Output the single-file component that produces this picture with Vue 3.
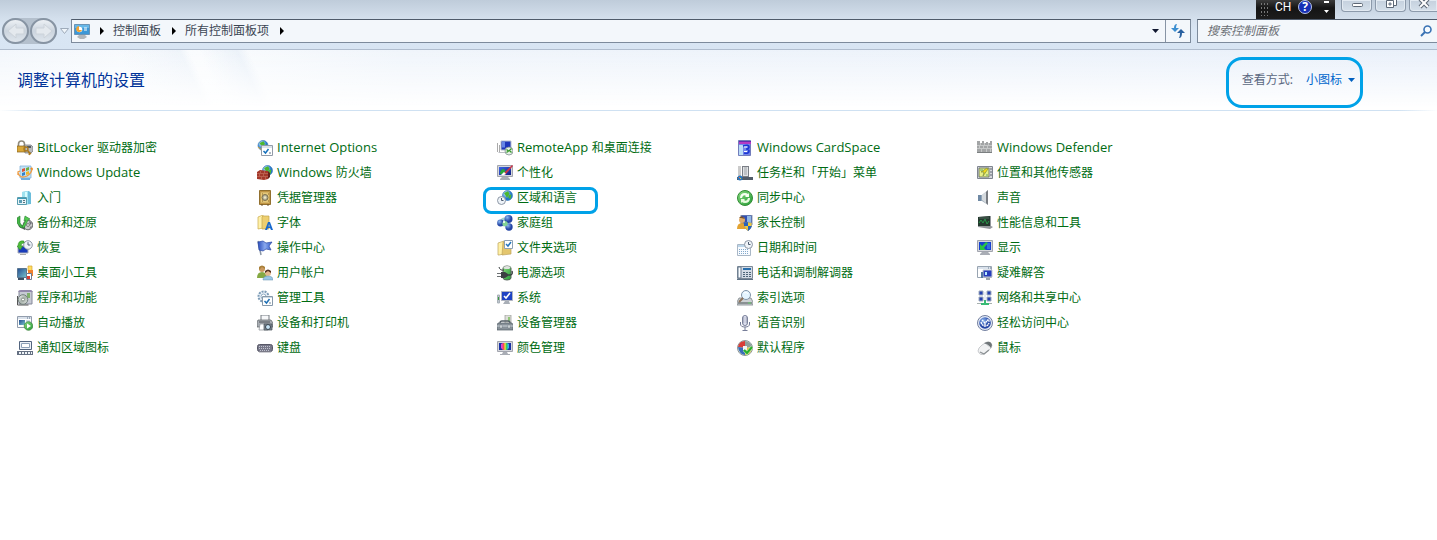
<script setup>
const monitor = (screen, extra = '') =>
  `<path d="M0.5 1.5h15v10h-15z" fill="#d5d7dc" stroke="#a2a5ae"/><path d="M2 3h12v7H2z" fill="${screen}"/><path d="M6 12h4l1 2h2v1H3v-1h2z" fill="#a9adb5"/>${extra}`
const globe = (cx, cy, r) =>
  `<circle cx="${cx}" cy="${cy}" r="${r}" fill="url(#globe)" stroke="#2d6fb4" stroke-width=".6"/><path d="M${cx - r * 0.7} ${cy - r * 0.5}l${r * 0.8}-${r * 0.35} ${r * 0.3} ${r * 0.5}-${r * 0.5} ${r * 0.8}zM${cx + r * 0.2} ${cy}l${r * 0.6}-${r * 0.2}-${r * 0.2} ${r * 0.9}-${r * 0.4}-${r * 0.2}z" fill="#4cb82f"/>`
const clock = (cx, cy, r) =>
  `<circle cx="${cx}" cy="${cy}" r="${r}" fill="#eef3f8" stroke="#8d97a5"/><path d="M${cx} ${cy - r + 1.5}V${cy}h${r - 2}" fill="none" stroke="#4c5a70"/>`

const icons = {
  bitlocker: '<path d="M1.5 7V4a3 3 0 0 1 6 0v3" fill="none" stroke="#8f8a7c" stroke-width="1.6"/><path d="M7 5h7l2 2v4l-2 2H8z" fill="#b9bbbd" stroke="#707478" stroke-width=".7"/><path d="M10 6h4v2h-4z" fill="#555b60"/><path d="M0 6h8v6H0z" fill="#d9a738" stroke="#82601c" stroke-width=".7"/><circle cx="9" cy="9" r="2" fill="none" stroke="#a87820" stroke-width="1.4"/><path d="M10 10l4 4M12 12l-1 1M13 13l-1 2" stroke="#a87820" stroke-width="1.5"/>',
  internet: globe(6, 5.5, 5) + '<path d="M1 7q3 4 8 3" fill="none" stroke="#e5ad32"/><path d="M4.500 5.500h11v10h-11z" fill="#fff" stroke="#929ba8"/><path d="M5 6h10v2H5z" fill="#dbe2ea"/><path d="M6.500 11l2 2 3-4" fill="none" stroke="#1671bd" stroke-width="1.500"/><path d="M12 13h2" stroke="#60758a"/>',
  remote: '<path d="M.5 3v9M2.500 5v8" stroke="#aaa"/><path d="M4 1h10v9H4z" fill="#1f37ba" stroke="#b9c1cd"/><path d="M5 1.500h3v6H5z" fill="#6686e5"/><path d="M1.500 12.500h9" stroke="#bcbfc4"/><circle cx="12" cy="11" r="4" fill="#e8f1e8" stroke="#808f91" stroke-width=".8"/><path d="M9.500 9.500l2 1.500-2 1.500M14.500 8.500l-2 2 2 2" fill="none" stroke="#35982b" stroke-width="1.300"/>',
  cardspace: '<path d="M1.500.5h12v15h-12z" fill="#7486eb" stroke="#727dbc"/><path d="M2 1h12v3H2z" fill="#b43bc4"/><path d="M2 1h12v1H2z" fill="#632dad"/><path d="M2 5h4v10H2z" fill="#b9dcf7"/><path d="M6 6q6-2 6 1 0 2-3 2 3 0 3 2 0 3-5 2" fill="none" stroke="#1b36d3" stroke-width="1.600"/><path d="M7 7h3M7 11.500h3" stroke="#fff"/>',
  defender: '<path d="M0 1h3v2h2V1h2v2h2V2h2v1h2V1h2v11H0z" fill="#a3a5a6"/><path d="M0 5.500h15M0 8.500h15M3.500 3v2M7.500 3v2M11.500 3v2M2.500 6v2M6.500 6v2M10.500 6v2M4.500 9v3M9.500 9v3M13.500 9v3" stroke="#cfd0d0" stroke-width=".8"/><path d="M0 12.500h15" stroke="#7b7f80"/>',
  update: '<path d="M3 1h11v12H3z" fill="#bfe2f6" stroke="#86b4d8" stroke-width=".8"/><path d="M4 13h9v2H4z" fill="#71aee1"/><path d="M5 4l3-1v3L5 7z" fill="#de5334"/><path d="M9 3l3-1v3L9 6z" fill="#70ae3c"/><path d="M5 8l3-1v3l-3 1z" fill="#3181cc"/><path d="M9 7l3-1v3l-3 1z" fill="#efb82e"/><path d="M1 8q2 6 9 3 5-3 5-8M1 10V7l2-1" fill="none" stroke="#ef9c43" stroke-width="1.300"/><path d="M13 4l2-2 1 3z" fill="#ef8c23"/>',
  firewall: globe(10.500, 5.500, 5) + '<path d="M0 7l3-2 8 1v8l-4 1-7-1z" fill="#a4382a"/><path d="M0 8.500h11M0 11.500h11M3.500 6v2M7.500 6v2M2.500 9v2M6.500 9v2M4.500 12v3M8.500 12v3" stroke="#d08471" stroke-width=".5"/><path d="M11 6l2 2v4l-2 2z" fill="#66201b"/>',
  personal: '<path d="M.5.500h15v11H.5z" fill="#d5d7dc" stroke="#a2a5ae"/><path d="M2 2h12v8H2z" fill="url(#blue)"/><path d="M5 12h6l2 2v1H3v-1z" fill="#a9adb5"/><path d="M3 9q0-5 4-5l2 3-2 3z" fill="#28a73a"/><path d="M7 8l8-8 1 1-7 8-2 1z" fill="#c9364a"/><path d="M4 10l3-3 2 2-2 1z" fill="#fff"/>',
  taskbar: '<path d="M1 1h3v12H1z" fill="#cbcbcb"/><path d="M5 1h7v11H5z" fill="#7b7f86"/><path d="M6 2h5v9H6z" fill="#e2e4e6"/><path d="M7 3h3M7 5h3M7 7h3M7 9h3" stroke="#9da1a6"/><path d="M0 12h16v3H0z" fill="#525c68"/><circle cx="3" cy="13" r="2.500" fill="#2e78bd"/><path d="M2 12h1v1H2z" fill="#ef6a3c"/><path d="M3 13h1v1H3z" fill="#f2c33d"/>',
  sensor: '<path d="M.5 1.500h15v12H.5z" fill="#d6d8dc" stroke="#7f858f"/><path d="M2 3h10v9H2z" fill="#e7ef85" stroke="#58655b" stroke-width=".8"/><path d="M10 3L4 7h3l-1 4 5-7z" fill="#f4db15" stroke="#6a7d43" stroke-width=".6"/><path d="M3 5h3M9 10h2" stroke="#60a46e"/><path d="M14 3v2M14 6v2M14 9v2" stroke="#626a77"/>',
  start: '<path d="M5 2l7-1 2 2v11l-9 1z" fill="#6bbddb"/><path d="M5 2l6-1v13l-6 1z" fill="#9fe2ef"/><path d="M8 2h2v6H8z" fill="#d8fcff"/><path d="M.5 7.500h9v7h-9z" fill="#e7f3f7" stroke="#589cae"/><path d="M1 8h8v1H1z" fill="#3c9cb8"/><path d="M2 10h3v3H2z" fill="#5a9db4"/><path d="M6 10.500h2M6 12.500h2" stroke="#59737d"/>',
  vault: '<path d="M2.500.5h11v14h-11z" fill="#c4953f" stroke="#92702f"/><path d="M3.500 2h9v11h-9z" fill="#e5c879" stroke="#b9944b" stroke-width=".7"/><circle cx="8" cy="7.500" r="3" fill="#b5b096" stroke="#685d3d" stroke-width=".8"/><circle cx="8" cy="7.500" r="1.200" fill="#eee7c4"/><path d="M5 4h1M11 4h1M5 11h1M11 11h1" stroke="#8a652a"/><path d="M4 15h2M10 15h2" stroke="#70522a"/>',
  region: globe(10.500, 5.500, 5) + clock(4.500, 10.500, 4),
  sync: '<circle cx="8" cy="8" r="7.500" fill="url(#green)" stroke="#338c35"/><path d="M3 8q0-5 5-5 2 0 3 1l1-1v4H8l1-1Q6 4 5 8z" fill="#f6fff2"/><path d="M13 8q0 5-5 5-2 0-3-1l-1 1V9h4l-1 1q3 2 4-2z" fill="#e8fbdf"/>',
  sound: '<path d="M1 5h4l6-5v15l-6-4H1z" fill="url(#silver)"/><path d="M1 5h3v6H1z" fill="#6f89a4"/><path d="M9 2l2-2v15l-2-2z" fill="#777b81"/><path d="M5 5l4-3v11l-4-3z" fill="#d5dade"/>',
  backup: '<circle cx="11" cy="10" r="4.800" fill="#c8c9ca" stroke="#67696a"/><circle cx="11" cy="10" r="1.400" fill="#fff" stroke="#777"/><path d="M12 6l3 2-2 2zM12 14l2-3 1 1z" fill="#706f79"/><path d="M1 9l7 2v4l-6-3z" fill="#5a5e60"/><path d="M0 3l3-2v7l3 4-2 1-4-5z" fill="#46b649" stroke="#21782a" stroke-width=".6"/><path d="M5 12l4-7-2 1 1-5 5 3-2 1-4 8z" fill="#53ca50" stroke="#23822b" stroke-width=".6"/>',
  fonts: '<path d="M1 2l5-2v13l-5 1z" fill="#fff1a9" stroke="#c9a94a" stroke-width=".7"/><path d="M6 1h6v13H5V2z" fill="#edcf70" stroke="#c2a34b" stroke-width=".7"/><path d="M8 15l3-8h2l3 8h-2l-1-2h-2l-1 2zM11.300 11.500h1.400L12 9z" fill="#1769cf"/>',
  homegroup: '<circle cx="7.500" cy="7" r="4.500" fill="#72b9b3" opacity=".65"/><circle cx="3.500" cy="8" r="3.400" fill="url(#ball)"/><circle cx="11.500" cy="4" r="4" fill="url(#ball)"/><circle cx="12" cy="12" r="3.700" fill="url(#ball)"/><circle cx="8" cy="8.500" r="2.600" fill="#83d394"/><circle cx="7" cy="7" r="1" fill="#fff"/>',
  parental: '<path d="M4 0h11v10H4z" fill="#304fb3" stroke="#8f9cad"/><path d="M10 1h4v8h-4z" fill="#91b8e4"/><circle cx="5" cy="5" r="3" fill="#e0ac6b"/><path d="M0 14q0-6 5-6t5 6z" fill="#e3a331"/><path d="M2 3q3-4 6 1l-4-1z" fill="#75502c"/><path d="M7 8q3 0 4-1 2 1 4 1 0 5-4 8-4-3-4-8z" fill="#f1ca38" stroke="#8d949a" stroke-width=".6"/><path d="M11 7v4H7q0-1 0-3zM11 11h4q-1 3-4 5z" fill="#2862ba"/>',
  performance: '<path d="M1 2l13-1v10l2 1-3 2-12-2z" fill="#92969b"/><path d="M1 2l12-1v10H1z" fill="#24392e"/><path d="M2 8l2-3 2 3 2-4 2 5 2-3" fill="none" stroke="#299349"/><path d="M2 3h10" stroke="#4f665b"/>',
  recovery: '<path d="M1 6h10v7H1z" fill="#193cba" stroke="#a9adb7"/><path d="M3 14h6v1H3z" fill="#aaa"/>' + clock(11, 5, 4.300) + '<path d="M1 6q0-6 6-5v2Q4 3 4 6h2l-3 4-3-4z" fill="#4cbb38" stroke="#2e8626" stroke-width=".5"/>',
  action: '<path d="M1 1l3 14" stroke="#8995a5" stroke-width="1.500"/><path d="M1 2l5-1 3 2 6-1-3 4 2 4-5-1-3 2-4-1z" fill="url(#flag)" stroke="#2948a4" stroke-width=".7"/>',
  folder: '<path d="M1 3l6-2v13l-5 1H1z" fill="#fff0a5" stroke="#bba35d" stroke-width=".7"/><path d="M6 2h8v12l-9 1z" fill="#e4c66d" stroke="#bfa35c" stroke-width=".7"/><path d="M7.500.5h8v8h-8z" fill="#fff" stroke="#8da1b4"/><path d="M9 4l2 2 3-4" fill="none" stroke="#2475bd" stroke-width="1.500"/>',
  date: '<path d="M.5 4.500h13v11H.5z" fill="#f8fbff" stroke="#a9b7c6"/><path d="M1 5h12v2H1z" fill="#bcd6ea"/><path d="M2 9.500h10M2 11.500h10M2 13.500h10" stroke="#83a9cb" stroke-dasharray="1 1"/>' + clock(11.500, 4.500, 4),
  display: '<path d="M.5.500h15v11H.5z" fill="#d5d7dc" stroke="#a2a5ae"/><path d="M2 2h12v8H2z" fill="#1741d1"/><path d="M5 12h6l2 2v1H3v-1z" fill="#a9adb5"/><path d="M13 4H9M13 6h-3M13 8h-3" stroke="#4ba3ed"/><path d="M3 4v6h6L7 8l4-5-2-1-4 4z" fill="#29c442"/>',
  gadgets: '<path d="M.5 3.500h9v9h-9z" fill="url(#screen)" stroke="#597690"/><path d="M11 1h4v5h-4z" fill="#ffdd60" stroke="#d6a331" stroke-width=".7"/><path d="M11 5h5v6h-5z" fill="#ef812d"/><path d="M9.500 8.500h5v6h-5z" fill="#fff" stroke="#6d7b90"/><path d="M10 11h3v3h-3z" fill="#db3b32"/><path d="M1 13h6v2H1z" fill="#3d5064"/>',
  users: '<circle cx="5" cy="4" r="3" fill="#cb9960"/><path d="M2 5V2q3-3 6 0v2L5 2z" fill="#a8803a"/><path d="M0 13q0-6 5-6t5 6z" fill="#85a943"/><circle cx="11" cy="8" r="3" fill="#e4b88e"/><path d="M8 8V6q3-3 6 0v2l-3-2z" fill="#55331f"/><path d="M6 15q0-4 5-4t5 4z" fill="#9ac6e3" stroke="#5c8fae" stroke-width=".5"/>',
  power: '<path d="M6 3q0-2 4-2t4 2v10q0 2-4 2t-4-2z" fill="url(#green)" stroke="#58635b"/><ellipse cx="10" cy="2.500" rx="3.500" ry="1.500" fill="#dfe3df"/><path d="M2 2q1 4 5 3" fill="none" stroke="#393f40"/><path d="M4 7h4l3 2v2l-3 2H4z" fill="#3b4042"/><path d="M0 8.500h4M0 11.500h4" stroke="#6b7072"/><path d="M11 10h2q3 0 2-4" fill="none" stroke="#393f40" stroke-width="1.400"/>',
  phone: '<path d="M.5 1.500h15v12H.5z" fill="#d3dbe5" stroke="#7c8997"/><path d="M1 2h3v11H1z" fill="#f9fcff" stroke="#66798c"/><path d="M6 3h8v2H6z" fill="#286ead"/><path d="M6 7.500h8M6 9.500h8M6 11.500h8" stroke="#4e6578" stroke-dasharray="2 1"/><path d="M0 14.500h16" stroke="#5f7286"/>',
  trouble: '<path d="M.5 1.500h14v11H.5z" fill="#fff" stroke="#98a4b1"/><path d="M1 2h13v2H1z" fill="#dae2ec"/><path d="M11 3h3" stroke="#65798e" stroke-dasharray="1 1"/><path d="M6 5h9v7H6z" fill="#263dba" stroke="#c4cad3"/><path d="M9 13h4v2H9z" fill="#9ba3ac"/><path d="M4 7h2v6H4z" fill="#5478a1"/><path d="M8 10V7h2v3z" fill="#b7eaff"/>',
  programs: '<path d="M2 1h13v13H2z" fill="#c7cad4" stroke="#85899a"/><path d="M1 1l3-1h10l2 2H2z" fill="#9388ac"/><path d="M10 3h3v5h-3z" fill="#7eb06a"/><path d="M.5 6v9h11" fill="none" stroke="#555"/><circle cx="6" cy="9.500" r="4.800" fill="url(#disc)" stroke="#72807c"/><circle cx="6" cy="9.500" r="1.500" fill="#fff" stroke="#859087"/>',
  tools: '<circle cx="6.500" cy="6.500" r="5" fill="#edf4fb" stroke="#7d9cb7" stroke-width="2" stroke-dasharray="2 1"/><circle cx="6.500" cy="6.500" r="2.500" fill="#fff" stroke="#8eaac1"/><path d="M5.500 6.500h10v9h-10z" fill="#fff" stroke="#8799aa"/><path d="M6 7h9v1H6z" fill="#cad9e5"/><path d="M7.500 11l2 2 3-4" fill="none" stroke="#1e70b5" stroke-width="1.500"/><path d="M12 13h2" stroke="#71879b"/>',
  system: '<path d="M.5 5v8h2V5z" fill="#bdc5cd" stroke="#a9b1b8"/><path d="M1.500 7v3" stroke="#3b9a42"/><path d="M4.500 1.500h11v9h-11z" fill="#1f43c3" stroke="#b0b5c0"/><path d="M7 6l2 2 4-5" fill="none" stroke="#fff" stroke-width="1.600"/><path d="M8 11h4l1 3H6z" fill="#a9afb7"/>',
  index: '<path d="M2 8h12l2 4v3H0v-3z" fill="#cdd1d4" stroke="#7c8489" stroke-width=".8"/><path d="M1 12h14v2H1z" fill="#8a9193"/><path d="M11 13h3" stroke="#65d16a"/><circle cx="9" cy="5" r="4.500" fill="#e4f4ff" stroke="#8093a7"/><path d="M6 8l-4 4" stroke="#8d735c" stroke-width="2"/><path d="M7 3q2-2 4 1" fill="none" stroke="#fff"/>',
  network: '<path d="M2 1h4v4H2zM10 1h4v4h-4zM2 7h4v4H2zM10 7h4v4h-4z" fill="#2440af" stroke="#a1adbd"/><path d="M8 2v11" stroke="#d4ddeb"/><path d="M7 10h2v3h3v2H4v-2h3z" fill="#39bb76"/><path d="M0 13.500h4M12 13.500h3" stroke="#a7b0ae"/>',
  autoplay: '<path d="M.5 1.500h14v11H.5z" fill="#fff" stroke="#929dac"/><path d="M1 2h13v2H1z" fill="#d9e1eb"/><path d="M10 3h4" stroke="#5d7388" stroke-dasharray="1 1"/><path d="M2 5h6v5H2z" fill="url(#screen)"/><path d="M9 6h4M9 8h4" stroke="#a1bfd7"/><circle cx="11.500" cy="11" r="4.300" fill="url(#green)" stroke="#39803a" stroke-width=".7"/><path d="M10 8.500v5l4-2.500z" fill="#fff"/>',
  printer: '<path d="M4 0h8v7H4z" fill="#f7f8fa" stroke="#757a81"/><path d="M1 5h13l2 3v4H0V7z" fill="#a8adb3" stroke="#595e63" stroke-width=".7"/><path d="M2 7h11" stroke="#4c5156"/><path d="M3 9h8v6H2z" fill="#fff" stroke="#858b91" stroke-width=".7"/><path d="M7 9h8v6H7z" fill="#808a94" stroke="#454e57" stroke-width=".7"/><circle cx="11" cy="12" r="2.500" fill="#c5e2f4" stroke="#39434c"/>',
  device: '<path d="M8 0h6v10H8z" fill="#ddded9" stroke="#959995" stroke-width=".7"/><path d="M11 2h2v5h-2z" fill="#91c578"/><path d="M3 8q0-2 2-2h6q2 0 2 2" fill="none" stroke="#566068" stroke-width="1.300"/><path d="M1 8h14l1 2v5H0v-5z" fill="#89929a" stroke="#525c65" stroke-width=".7"/><path d="M0 11h16" stroke="#c9d1d7"/><path d="M3 10h2v3H3zM11 10h2v3h-2z" fill="#e2e6e9" stroke="#656e75" stroke-width=".4"/>',
  speech: '<rect x="5.500" y=".5" width="5" height="10" rx="2.500" fill="#cbd0de" stroke="#7b819b"/><path d="M5 3h6M5 5h6M5 7h6" stroke="#81869e" stroke-width=".7"/><path d="M8 1v9" stroke="#eef"/><path d="M3.500 7v2q0 3 4.500 3t4.500-3V7M8 12v3M5.500 15.500h5" fill="none" stroke="#777e99"/>',
  access: '<circle cx="8" cy="8" r="7.500" fill="#e4ebf7" stroke="#737f9f"/><circle cx="8" cy="8" r="5.800" fill="url(#ball)"/><path d="M4 7q1 4 4 4t4-3M5 5l3 3 3-3M8 8v3" fill="none" stroke="#fff" stroke-width="1.300" stroke-dasharray="2 .5"/><path d="M10 5h2v2" fill="none" stroke="#fff"/>',
  tray: '<path d="M2.500 1.500h12v8h-12z" fill="#edf2f8" stroke="#52647e"/><path d="M4.500 3.500h8v4h-8z" fill="#fff" stroke="#8da1b8"/><path d="M0 11h16v4H0z" fill="#657082"/><path d="M2 13h13" stroke="#eef3f7" stroke-width="2" stroke-dasharray="2 1"/>',
  keyboard: '<rect x=".5" y="4.500" width="15" height="7" rx="2" fill="#777889" stroke="#575766"/><path d="M2 6.500h12M2 8.500h12M3 10.500h10" stroke="#c2c3cf" stroke-dasharray="1 1"/><path d="M2 12h12" stroke="#a0a0aa"/>',
  color: monitor('#1932a5', '<path d="M4 4l2-1h4l2 1v4l-2 2H6L4 8z" fill="url(#rainbow)"/>'),
  defaults: '<circle cx="8" cy="8" r="7.500" fill="#dbe2df" stroke="#8b9696"/><path d="M8 8L1 7q1-6 7-6z" fill="#d83d37"/><path d="M8 8V1q6 1 7 6z" fill="#8ca19c"/><path d="M8 8l7-1q0 7-7 8z" fill="#dfc63f"/><path d="M8 8v7q-6-1-7-8z" fill="#396cb9"/><path d="M6 6h4v4H6z" fill="#f2f4f4"/><path d="M7 10l3 3 5-6" fill="none" stroke="#c5f0b8" stroke-width="3"/><path d="M7 10l3 3 5-6" fill="none" stroke="#27ae2d" stroke-width="2"/>',
  mouse: '<path d="M1 11q0-3 4-6l5-3q3-1 5 3 0 3-3 5l-5 4q-4 2-6-3z" fill="#f1f2f3" stroke="#b5b8bb" stroke-width=".7"/><path d="M7 3l3-1q4-1 5 3l-1 3q-2-3-7-5z" fill="#6f7578"/><path d="M9 4l4 3" stroke="#c9cdd0"/><path d="M3 12l4 2 5-4" fill="none" stroke="#8c9194" stroke-width="1.300"/>',
}

const items = [
  ['bitlocker', 'BitLocker 驱动器加密'], ['internet', 'Internet Options'], ['remote', 'RemoteApp 和桌面连接'], ['cardspace', 'Windows CardSpace'], ['defender', 'Windows Defender'],
  ['update', 'Windows Update'], ['firewall', 'Windows 防火墙'], ['personal', '个性化'], ['taskbar', '任务栏和「开始」菜单'], ['sensor', '位置和其他传感器'],
  ['start', '入门'], ['vault', '凭据管理器'], ['region', '区域和语言'], ['sync', '同步中心'], ['sound', '声音'],
  ['backup', '备份和还原'], ['fonts', '字体'], ['homegroup', '家庭组'], ['parental', '家长控制'], ['performance', '性能信息和工具'],
  ['recovery', '恢复'], ['action', '操作中心'], ['folder', '文件夹选项'], ['date', '日期和时间'], ['display', '显示'],
  ['gadgets', '桌面小工具'], ['users', '用户帐户'], ['power', '电源选项'], ['phone', '电话和调制解调器'], ['trouble', '疑难解答'],
  ['programs', '程序和功能'], ['tools', '管理工具'], ['system', '系统'], ['index', '索引选项'], ['network', '网络和共享中心'],
  ['autoplay', '自动播放'], ['printer', '设备和打印机'], ['device', '设备管理器'], ['speech', '语音识别'], ['access', '轻松访问中心'],
  ['tray', '通知区域图标'], ['keyboard', '键盘'], ['color', '颜色管理'], ['defaults', '默认程序'], ['mouse', '鼠标'],
].map(([icon, text]) => {
  const [, latin, han] = text.match(/^([A-Za-z ]*)(.*)$/)
  return { icon, latin, han }
})
</script>

<template>
  <div class="window">
    <svg class="defs" aria-hidden="true">
      <defs>
        <radialGradient id="globe" cx=".35" cy=".3"><stop offset="0" stop-color="#d6f5ff" /><stop offset="1" stop-color="#2478cc" /></radialGradient>
        <radialGradient id="ball" cx=".35" cy=".3"><stop offset="0" stop-color="#8cb7f0" /><stop offset="1" stop-color="#2445a5" /></radialGradient>
        <linearGradient id="green" x2="1" y2="1"><stop stop-color="#8bdb80" /><stop offset="1" stop-color="#239b36" /></linearGradient>
        <linearGradient id="blue" x2="1" y2="1"><stop stop-color="#3b65e7" /><stop offset="1" stop-color="#101e83" /></linearGradient>
        <linearGradient id="flag" x2="1"><stop stop-color="#2a4dbc" /><stop offset=".5" stop-color="#8aa9ef" /><stop offset="1" stop-color="#3159c8" /></linearGradient>
        <linearGradient id="silver"><stop stop-color="#7893ac" /><stop offset="1" stop-color="#c4c9cd" /></linearGradient>
        <linearGradient id="screen" x2="1" y2="1"><stop stop-color="#264c90" /><stop offset="1" stop-color="#77c3cc" /></linearGradient>
        <linearGradient id="disc" x2="1" y2="1"><stop stop-color="#f4f7f5" /><stop offset=".5" stop-color="#a9b3ad" /><stop offset="1" stop-color="#e5e8e3" /></linearGradient>
        <linearGradient id="rainbow"><stop offset=".1" stop-color="#e942d5" /><stop offset=".35" stop-color="#ef533e" /><stop offset=".5" stop-color="#f5e543" /><stop offset=".7" stop-color="#32ce60" /><stop offset=".9" stop-color="#33b5ed" /></linearGradient>
      </defs>
    </svg>

    <header class="chrome">
      <div class="caption">
        <div class="langbar">
          <span class="grip"></span>
          <span class="lang">CH</span>
          <button class="help" aria-label="帮助">?</button>
          <button class="lang-menu" aria-label="语言栏选项">
            <svg width="7" height="14" viewBox="0 0 7 14"><path d="M1 1h5v2H1zM1 10h5L3.500 13z" fill="#fff" /></svg>
          </button>
        </div>
        <div class="controls">
          <button aria-label="最小化"><svg width="16" height="12" viewBox="0 0 16 12"><rect x="3.500" y="3.500" width="10" height="3" rx="1" fill="#fff" stroke="#5d6876" /></svg></button>
          <button aria-label="还原"><svg width="16" height="12" viewBox="0 0 16 12"><path d="M6.500-1.500h7v7h-7z" fill="#fff" stroke="#5d6876" /><path d="M3.500.500h7v7h-7z" fill="#fff" stroke="#5d6876" /><path d="M6 3h2v2H6z" fill="#bfcbd8" stroke="#5d6876" stroke-width=".8" /></svg></button>
          <button aria-label="关闭"><svg width="16" height="12" viewBox="0 0 16 12"><path d="M4-1l8 8M12-1L4 7" stroke="#5d6876" stroke-width="4" /><path d="M4-1l8 8M12-1L4 7" stroke="#fff" stroke-width="2" /></svg></button>
        </div>
      </div>

      <div class="navrow">
        <div class="history">
          <button class="round" aria-label="后退"><svg width="18" height="16" viewBox="0 0 18 16"><path d="M1 8l8-7v4h8v6H9v4z" fill="#e4e9ee" stroke="#ccd3da" /></svg></button>
          <button class="round" aria-label="前进"><svg width="18" height="16" viewBox="0 0 18 16"><path d="M17 8L9 1v4H1v6h8v4z" fill="#e4e9ee" stroke="#ccd3da" /></svg></button>
        </div>
        <button class="recent" aria-label="最近的页面"><svg width="9" height="6" viewBox="0 0 9 6"><path d="M.5.5h8l-4 5z" fill="#eff5fa" stroke="#9eabba" /></svg></button>
        <nav class="address">
          <svg class="cp" width="16" height="16" viewBox="0 0 16 16"><path d="M.5 1.500h15v10H.5z" fill="#3c98d7" stroke="#6a94b6" /><path d="M1 2h14v3H1z" fill="#65b7e8" /><circle cx="5.500" cy="6.500" r="2.800" fill="#fff" /><path d="M5 3a3 3 0 1 0 3 4H5z" fill="#f2a12e" /><path d="M10 5h3M10 7h3" stroke="#fff" /><path d="M5 12h6l2 2-3 2H6l-3-2z" fill="#b0b6bb" /></svg>
          <svg class="sep" width="5" height="8" viewBox="0 0 5 8"><path d="M0 0l4 4-4 4z" fill="#000" /></svg>
          <a href="#">控制面板</a>
          <svg class="sep" width="5" height="8" viewBox="0 0 5 8"><path d="M0 0l4 4-4 4z" fill="#000" /></svg>
          <a href="#">所有控制面板项</a>
          <svg class="sep" width="5" height="8" viewBox="0 0 5 8"><path d="M0 0l4 4-4 4z" fill="#000" /></svg>
          <button class="drop" aria-label="以前的位置"><svg width="7" height="4" viewBox="0 0 7 4"><path d="M0 0h7L3.500 4z" fill="#101830" /></svg></button>
          <button class="refresh" aria-label="刷新"><svg width="14" height="14" viewBox="0 0 14 14"><path d="M6 0Q3 0 3 4H0l4 4 4-4H5q0-2 1-4z" fill="#3b8ed0" /><path d="M8 14q3 0 3-5h3l-4-4-4 4h3q0 3-1 5z" fill="#28609f" /></svg></button>
        </nav>
        <form class="search" @submit.prevent>
          <input type="text" placeholder="搜索控制面板" aria-label="搜索控制面板" />
          <button aria-label="搜索"><svg width="12" height="12" viewBox="0 0 12 12"><circle cx="7.500" cy="4.500" r="3.500" fill="#f5faff" stroke="#3972b4" stroke-width="1.600" /><path d="M5 7l-4 4" stroke="#3972b4" stroke-width="2" /></svg></button>
        </form>
      </div>
    </header>

    <section class="banner">
      <h1>调整计算机的设置</h1>
      <div class="view">
        <span id="view-label">查看方式:</span>
        <button aria-labelledby="view-label view-value"><span id="view-value">小图标</span><svg width="7" height="4" viewBox="0 0 7 4"><path d="M0 0h7L3.500 4z" fill="#0060c0" /></svg></button>
      </div>
    </section>

    <main class="grid">
      <a v-for="item in items" :key="item.icon" href="#" class="item" :class="{ marked: item.icon === 'region' }">
        <svg width="16" height="16" viewBox="0 0 16 16" aria-hidden="true" v-html="icons[item.icon]"></svg>
        <span class="label"><span v-if="item.latin" class="latin">{{ item.latin }}</span>{{ item.han }}</span>
      </a>
    </main>
  </div>
</template>

<style>
body {
  background: #fff;
}
</style>

<style scoped>
.window {
  font: 12px/16px "Noto Sans", "Noto Sans CJK SC", sans-serif;
  color: #3c4654;
}
.defs {
  position: absolute;
  width: 0;
  height: 0;
}
button {
  display: flex;
  align-items: center;
  justify-content: center;
  padding: 0;
  border: 0;
  background: none;
  font: inherit;
  color: inherit;
}
a {
  color: inherit;
  text-decoration: none;
}
svg {
  flex: none;
}
.chrome {
  border-bottom: 1px solid #b0bdce;
  background: linear-gradient(#bfccda 0, #d3dfec 18px, #d9e6f4 30px, #d8e5f3);
}
.caption {
  display: flex;
  justify-content: flex-end;
  height: 19px;
}
.langbar {
  display: flex;
  align-items: flex-start;
  width: 79px;
  height: 19px;
  background: linear-gradient(#3b3b3b, #151515 8px, #1c1c1c);
  color: #fff;
}
.grip {
  width: 8px;
  height: 14px;
  margin: 2px 7px 0 4px;
  background: radial-gradient(circle, #777 1px, transparent 1px) 0 0 / 3px 4px;
}
.lang {
  width: 23px;
  font-family: Roboto, sans-serif;
  line-height: 14px;
}
.help {
  width: 14px;
  height: 14px;
  border: 1px solid #b8c4e6;
  border-radius: 50%;
  background: #1730b5;
  font-weight: 700;
}
.lang-menu {
  width: 7px;
  margin-left: 11px;
}
.controls {
  display: flex;
  gap: 3px;
  margin-left: 6px;
}
.controls button {
  width: 31px;
  height: 12px;
  border: 1px solid #8c9aab;
  border-top: 0;
  border-radius: 0 0 4px 4px;
  background: linear-gradient(#c4d0dd, #d5e0eb);
  box-shadow: inset 0 0 0 1px #e2eaf2;
}
.controls button:last-child {
  width: 28px;
  border-right: 0;
  border-radius: 0 0 0 4px;
}
.navrow {
  display: flex;
  align-items: center;
  height: 24px;
  padding: 0 0 6px 2px;
}
.history {
  display: flex;
  gap: 1px;
  border-radius: 14px;
  background: #b4c0cd;
}
.round {
  width: 27px;
  height: 26px;
  border: 2px solid #8794a3;
  border-radius: 50%;
  background: linear-gradient(#edf1f5, #cbd4de 50%, #dfe6ed);
}
.recent {
  width: 14px;
}
.address {
  display: flex;
  flex: 1;
  align-items: center;
  height: 22px;
  border: 1px solid #7d8b9c;
  border-top-color: #4f5b6b;
  background: #f3f7fb;
}
.cp {
  margin: 0 10px 0 2px;
}
.sep {
  margin: 0 8px 0 0;
}
.address a {
  margin-right: 11px;
}
.drop {
  width: 20px;
  height: 22px;
  margin-left: auto;
}
.refresh {
  width: 25px;
  height: 22px;
  border-left: 1px solid #8794a5;
}
.search {
  display: flex;
  align-items: center;
  width: 239px;
  height: 22px;
  margin-left: 6px;
  border: 1px solid #7d8b9c;
  border-top-color: #4f5b6b;
  border-right: 0;
  background: #f3f7fb;
}
.search input {
  flex: 1;
  min-width: 0;
  padding: 0 0 0 9px;
  border: 0;
  outline: 0;
  background: none;
  font: italic 12px/16px "Noto Sans", "Noto Sans CJK SC", sans-serif;
}
.search input::placeholder {
  color: #6b6f75;
  opacity: 1;
}
.search button {
  width: 22px;
}
.banner {
  display: flex;
  align-items: flex-start;
  justify-content: space-between;
  height: 60px;
  padding: 0 74px 0 17px;
  border-bottom: 1px solid;
  border-image: linear-gradient(90deg, #fff, #cfe1f2 40px, #cfe1f2 calc(100% - 40px), #fff) 1;
  background:
    linear-gradient(transparent, #fff 58px),
    linear-gradient(65deg, transparent 130px, #dfe9f566 188px, transparent 196px, transparent 205px, #dfe9f580 240px, transparent 250px),
    linear-gradient(90deg, #f3f7fc, #fafcfe 200px, #f0f5fb 400px, #e9f0fa);
}
h1 {
  margin: 18px 0 0;
  font-size: 16px;
  font-weight: 400;
  line-height: 24px;
  color: #003399;
}
.view {
  display: flex;
  align-items: center;
  gap: 13px;
  height: 39px;
  margin-top: 7px;
  padding: 0 5px 6px 13px;
  border: 3px solid #00a2e8;
  border-radius: 16px;
  color: #5a6780;
}
.view button {
  gap: 6px;
  color: #0066cc;
}
.grid {
  display: grid;
  grid-template-columns: repeat(auto-fill, 240px);
  grid-auto-rows: 25px;
  padding: 24px 17px;
}
.item {
  position: relative;
  display: flex;
  align-items: center;
  justify-self: start;
  gap: 4px;
  color: #006b12;
  white-space: nowrap;
}
.label {
  white-space: pre;
}
.latin {
  font-family: "Open Sans", "Noto Sans", sans-serif;
  font-size: 13px;
}
.marked::after {
  content: "";
  position: absolute;
  inset: 2px -21px -4px -14px;
  border: 3px solid #00a2e8;
  border-radius: 8px;
}
</style>
